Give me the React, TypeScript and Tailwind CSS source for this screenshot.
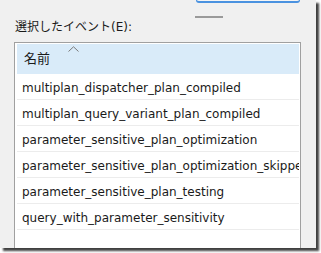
const events = [
  "multiplan_dispatcher_plan_compiled",
  "multiplan_query_variant_plan_compiled",
  "parameter_sensitive_plan_optimization",
  "parameter_sensitive_plan_optimization_skipped",
  "parameter_sensitive_plan_testing",
  "query_with_parameter_sensitivity",
];

export default function App() {
  return (
    <div
      className="h-[253px] w-[321px] overflow-hidden bg-white"
      style={{ fontFamily: '"DejaVu Sans", "Noto Sans CJK JP", sans-serif' }}
    >
      <div className="flex h-[248px] w-[316px] flex-col overflow-hidden bg-[#f0f0f0] shadow-[3px_3px_2px_rgba(0,0,0,0.75)]">
        {/* bottom edge of the focused button above */}
        <div className="ml-[196px] h-[3px] w-[104px] shrink-0 rounded-b-[3px] border-x border-b-2 border-[#4a92e0] bg-[#f5f5f5]" />
        <div className="ml-[195px] mt-[13px] h-[2px] w-[28px] shrink-0 bg-[#9a9a9a]" />

        <p className="ml-[15px] mt-px text-[12px] leading-4 text-[#1a1a1a]">選択したイベント(E):</p>

        <div className="ml-[14px] mt-[7px] h-[240px] w-[287px] shrink-0 border border-[#a0a0a0] bg-white pl-[2px] pr-px pt-px">
          <div className="relative flex h-[30px] items-center bg-[#d9ebf9] pl-[7px] text-[13px] text-[#1a1a1a]">
            名前
            <svg className="absolute left-[51px] top-[2px]" width="11" height="6" viewBox="0 0 11 6">
              <polyline points="0.5,5.5 5.5,0.8 10.5,5.5" fill="none" stroke="#7a7a7a" strokeWidth="1" />
            </svg>
          </div>
          {events.map((name) => (
            <div
              key={name}
              className="flex h-[26px] items-center overflow-hidden whitespace-nowrap border-b border-[#ececec] pl-[5px] pt-[2px] text-[12px] text-[#1a1a1a]"
            >
              {name}
            </div>
          ))}
        </div>
      </div>
    </div>
  );
}
